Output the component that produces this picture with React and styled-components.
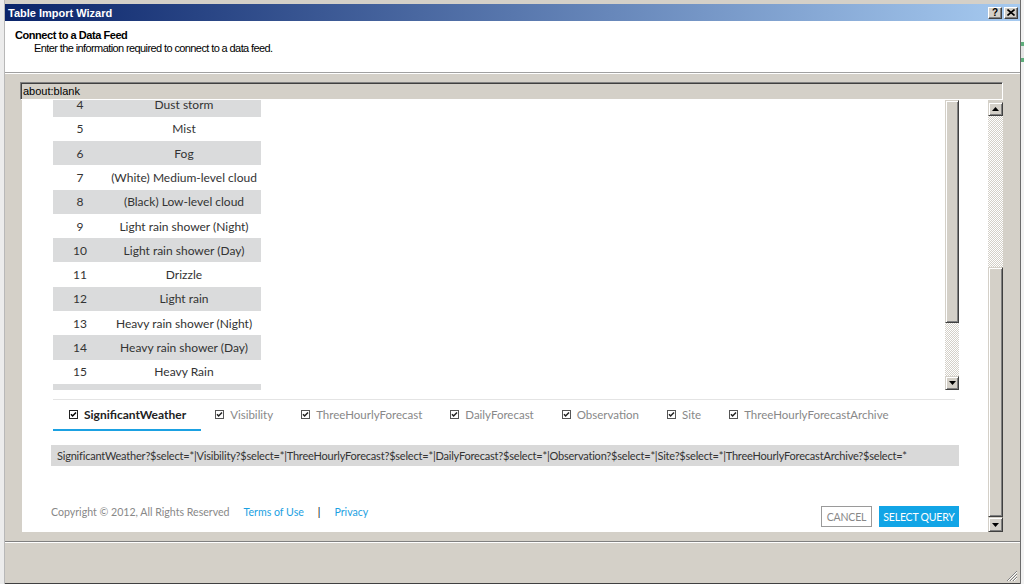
import React from 'react';
import styled, { createGlobalStyle } from 'styled-components';

const GlobalStyle = createGlobalStyle`
  html, body {
    margin: 0;
    padding: 0;
  }
  body {
    width: 1024px;
    height: 584px;
    overflow: hidden;
    background: #d4d0c8;
    font-family: "Liberation Sans", Arial, sans-serif;
  }
`;

const dialogFont = `"Liberation Sans", Arial, sans-serif`;
const webFont = `Lato, "Open Sans", sans-serif`;
const dither = `repeating-conic-gradient(#d4d0c8 0 25%, #ffffff 0 50%) 0 0 / 2px 2px`;

const Screen = styled.div`
  display: flex;
  width: 1024px;
  height: 584px;
  overflow: hidden;
`;

const LeftBackdrop = styled.div`
  flex: none;
  width: 4px;
  background: #ececec;
  border-right: 1px solid #b8b8b8;
`;

const RightBackdrop = styled.div`
  flex: none;
  width: 3px;
  border-left: 1px solid #6b6b6b;
  background: linear-gradient(#f2f2f2 0 42px, #5fae7c 42px 46px, #e6e6e6 46px 58px, #5fae7c 58px 62px, #f2f2f2 62px);
`;

const Window = styled.div`
  flex: 1;
  display: flex;
  flex-direction: column;
  background: #d4d0c8;
  padding-top: 4px;
  min-width: 0;
`;

const TitleBar = styled.div`
  height: 17px;
  display: flex;
  align-items: center;
  justify-content: space-between;
  padding: 0 2px 0 3px;
  background: linear-gradient(to right, #0a246a, #a6caf0);
`;

const TitleText = styled.span`
  color: #fff;
  font: bold 11px ${dialogFont};
`;

const CaptionButtons = styled.div`
  display: flex;
  gap: 2px;
`;

const CaptionButton = styled.div`
  width: 14px;
  height: 12px;
  box-sizing: border-box;
  background: #d4d0c8;
  border: 1px solid;
  border-color: #ffffff #404040 #404040 #ffffff;
  box-shadow: inset -1px -1px #808080;
  display: flex;
  align-items: center;
  justify-content: center;
  font: bold 10px ${dialogFont};
  color: #000;
  line-height: 1;
`;

const Header = styled.div`
  height: 52px;
  background: #fff;
  border-bottom: 1px solid #a0a0a0;
  padding: 8px 10px 0;
  box-sizing: border-box;
  font-family: ${dialogFont};
`;

const HeaderTitle = styled.div`
  font-weight: bold;
  font-size: 11px;
  line-height: 13px;
  color: #000;
  letter-spacing: -0.45px;
`;

const HeaderSubtitle = styled.div`
  font-size: 11px;
  line-height: 13px;
  margin-left: 19px;
  color: #000;
  letter-spacing: -0.6px;
`;

const Body = styled.div`
  flex: none;
  padding: 8px 17px 0 15px;
  border-top: 1px solid #fff;
`;

const AddressBar = styled.div`
  height: 18px;
  box-sizing: border-box;
  border: 1px solid;
  border-color: #808080 #ffffff #ffffff #808080;
  box-shadow: inset 1px 1px #404040;
  padding: 0 0 0 2px;
  font: 11px/16px ${dialogFont};
  color: #000;
`;

const Browser = styled.div`
  display: flex;
  height: 432px;
  margin-left: 2px;
`;

const Page = styled.div`
  flex: 1;
  background: #fff;
  padding: 0 29px;
  display: flex;
  flex-direction: column;
  font-family: ${webFont};
  min-width: 0;
`;

const Scrollbar = styled.div`
  flex: none;
  width: ${p => p.$w}px;
  display: flex;
  flex-direction: column;
  padding-top: ${p => p.$top || 0}px;
  box-sizing: border-box;
`;

const ScrollPart = styled.div`
  flex: none;
  height: ${p => p.$h}px;
  box-sizing: border-box;
  background: ${p => (p.$track ? dither : '#d4d0c8')};
  ${p =>
    p.$track
      ? ''
      : `border: 1px solid; border-color: #d4d0c8 #404040 #404040 #d4d0c8; box-shadow: inset 1px 1px #fff, inset -1px -1px #808080;`}
  display: flex;
  align-items: center;
  justify-content: center;
`;

const Arrow = ({ down }) => (
  <svg width="7" height="4" viewBox="0 0 7 4">
    <polygon points={down ? '0,0 7,0 3.5,4' : '0,4 7,4 3.5,0'} fill="#000" />
  </svg>
);

const InnerFrame = styled.div`
  display: flex;
  height: 290px;
  margin-left: 2px;
  flex: none;
`;

const FrameView = styled.div`
  flex: 1;
  overflow: hidden;
`;

const WeatherTable = styled.table`
  border-collapse: collapse;
  margin-top: -7.6px;
  width: 208px;
  font-size: 12px;
  color: #333;
`;

const Row = styled.tr`
  height: 24.3px;
  background: ${p => (p.$shade ? '#dadbdc' : '#fff')};
`;

const Cell = styled.td`
  padding: 0;
  text-align: center;
  width: ${p => p.$w}px;
`;

const TabStrip = styled.div`
  display: flex;
  margin: 9px 0 0 2px;
  width: 902px;
  height: 31px;
  border-top: 1px solid #e4e4e4;
  flex: none;
`;

const Tab = styled.div`
  display: flex;
  align-items: center;
  gap: 6px;
  padding: 0 ${p => (p.$active ? '15px 0 16px' : '14px')};
  box-sizing: border-box;
  border-bottom: 2px solid ${p => (p.$active ? '#1ba1e2' : 'transparent')};
  font-size: ${p => (p.$active ? '12px' : '11.5px')};
  font-weight: ${p => (p.$active ? 'bold' : 'normal')};
  color: ${p => (p.$active ? '#222' : '#888')};
`;

const CheckBox = ({ dark }) => (
  <svg width="9" height="9" viewBox="0 0 9 9">
    <rect x="0.5" y="0.5" width="8" height="8" fill="#fff" stroke={dark ? '#222' : '#555'} />
    <polyline points="2,4.2 3.6,6 7,2.4" fill="none" stroke={dark ? '#000' : '#222'} strokeWidth="1.5" />
  </svg>
);

const QueryBar = styled.div`
  margin-top: 14px;
  height: 21px;
  flex: none;
  background: #d9d9d9;
  padding-left: 6px;
  font-size: 11px;
  letter-spacing: -0.2px;
  line-height: 21px;
  color: #333;
  white-space: nowrap;
  overflow: hidden;
`;

const Footer = styled.div`
  margin-top: 40px;
  height: 21px;
  display: flex;
  justify-content: space-between;
  flex: none;
`;

const FooterLinks = styled.div`
  display: flex;
  gap: 14px;
  margin-top: -1px;
  font-size: 10.6px;
  line-height: 14px;
  color: #888;
`;

const Link = styled.span`
  color: #1ba1e2;
`;

const Pipe = styled.span`
  color: #000;
`;

const Buttons = styled.div`
  display: flex;
  gap: 7px;
`;

const Button = styled.div`
  height: 21px;
  width: ${p => (p.$primary ? 80 : 51)}px;
  box-sizing: border-box;
  display: flex;
  align-items: center;
  justify-content: center;
  font-size: 10.5px;
  letter-spacing: -0.2px;
  text-transform: uppercase;
  background: ${p => (p.$primary ? '#12a5e6' : '#fff')};
  color: ${p => (p.$primary ? '#fff' : '#888')};
  border: 1px solid ${p => (p.$primary ? '#12a5e6' : '#9a9a9a')};
`;

const Separator = styled.div`
  margin-top: 9px;
  border-top: 1px solid #808080;
  border-bottom: 1px solid #ffffff;
`;

const StatusArea = styled.div`
  flex: 1;
  position: relative;
  border-bottom: 1px solid #404040;
`;

const Grip = styled.svg`
  position: absolute;
  right: 2px;
  bottom: 1px;
`;

const rows = [
  [4, 'Dust storm'],
  [5, 'Mist'],
  [6, 'Fog'],
  [7, '(White) Medium-level cloud'],
  [8, '(Black) Low-level cloud'],
  [9, 'Light rain shower (Night)'],
  [10, 'Light rain shower (Day)'],
  [11, 'Drizzle'],
  [12, 'Light rain'],
  [13, 'Heavy rain shower (Night)'],
  [14, 'Heavy rain shower (Day)'],
  [15, 'Heavy Rain'],
];

const tabs = [
  'SignificantWeather',
  'Visibility',
  'ThreeHourlyForecast',
  'DailyForecast',
  'Observation',
  'Site',
  'ThreeHourlyForecastArchive',
];

const query = tabs.map(t => `${t}?$select=*`).join('|');

const App = () => (
  <>
    <GlobalStyle />
    <Screen>
      <LeftBackdrop />
      <Window>
        <TitleBar>
          <TitleText>Table Import Wizard</TitleText>
          <CaptionButtons>
            <CaptionButton>?</CaptionButton>
            <CaptionButton>
              <svg width="8" height="7" viewBox="0 0 8 7">
                <path d="M0.5 0.5 L7.5 6.5 M7.5 0.5 L0.5 6.5" stroke="#000" strokeWidth="1.6" />
              </svg>
            </CaptionButton>
          </CaptionButtons>
        </TitleBar>

        <Header>
          <HeaderTitle>Connect to a Data Feed</HeaderTitle>
          <HeaderSubtitle>Enter the information required to connect to a data feed.</HeaderSubtitle>
        </Header>

        <Body>
          <AddressBar>about:blank</AddressBar>
          <Browser>
            <Page>
              <InnerFrame>
                <FrameView>
                  <WeatherTable>
                    <tbody>
                      {rows.map(([n, label]) => (
                        <Row key={n} $shade={n % 2 === 0}>
                          <Cell $w={54}>{n}</Cell>
                          <Cell $w={154}>{label}</Cell>
                        </Row>
                      ))}
                      {/* next row, scrolled out of view */}
                      <Row $shade>
                        <Cell $w={54} />
                        <Cell $w={154} />
                      </Row>
                    </tbody>
                  </WeatherTable>
                </FrameView>
                <Scrollbar $w={14}>
                  <ScrollPart $h={223} />
                  <ScrollPart $h={53} $track />
                  <ScrollPart $h={14}>
                    <Arrow down />
                  </ScrollPart>
                </Scrollbar>
              </InnerFrame>

              <TabStrip>
                {tabs.map((t, i) => (
                  <Tab key={t} $active={i === 0}>
                    <CheckBox dark={i === 0} />
                    {t}
                  </Tab>
                ))}
              </TabStrip>

              <QueryBar>{query}</QueryBar>

              <Footer>
                <FooterLinks>
                  <span>Copyright © 2012, All Rights Reserved</span>
                  <Link>Terms of Use</Link>
                  <Pipe>|</Pipe>
                  <Link>Privacy</Link>
                </FooterLinks>
                <Buttons>
                  <Button>Cancel</Button>
                  <Button $primary>Select Query</Button>
                </Buttons>
              </Footer>
            </Page>
            <Scrollbar $w={15} $top={2}>
              <ScrollPart $h={14}>
                <Arrow />
              </ScrollPart>
              <ScrollPart $h={151} $track />
              <ScrollPart $h={250} />
              <ScrollPart $h={15}>
                <Arrow down />
              </ScrollPart>
            </Scrollbar>
          </Browser>
        </Body>

        <Separator />
        <StatusArea>
          <Grip width="12" height="12" viewBox="0 0 12 12">
            <path d="M11 1 L1 11 M11 4 L4 11 M11 7 L7 11" stroke="#808080" strokeWidth="1" />
            <path d="M11 2 L2 11 M11 5 L5 11 M11 8 L8 11" stroke="#ffffff" strokeWidth="1" />
          </Grip>
        </StatusArea>
      </Window>
      <RightBackdrop />
    </Screen>
  </>
);

export default App;
